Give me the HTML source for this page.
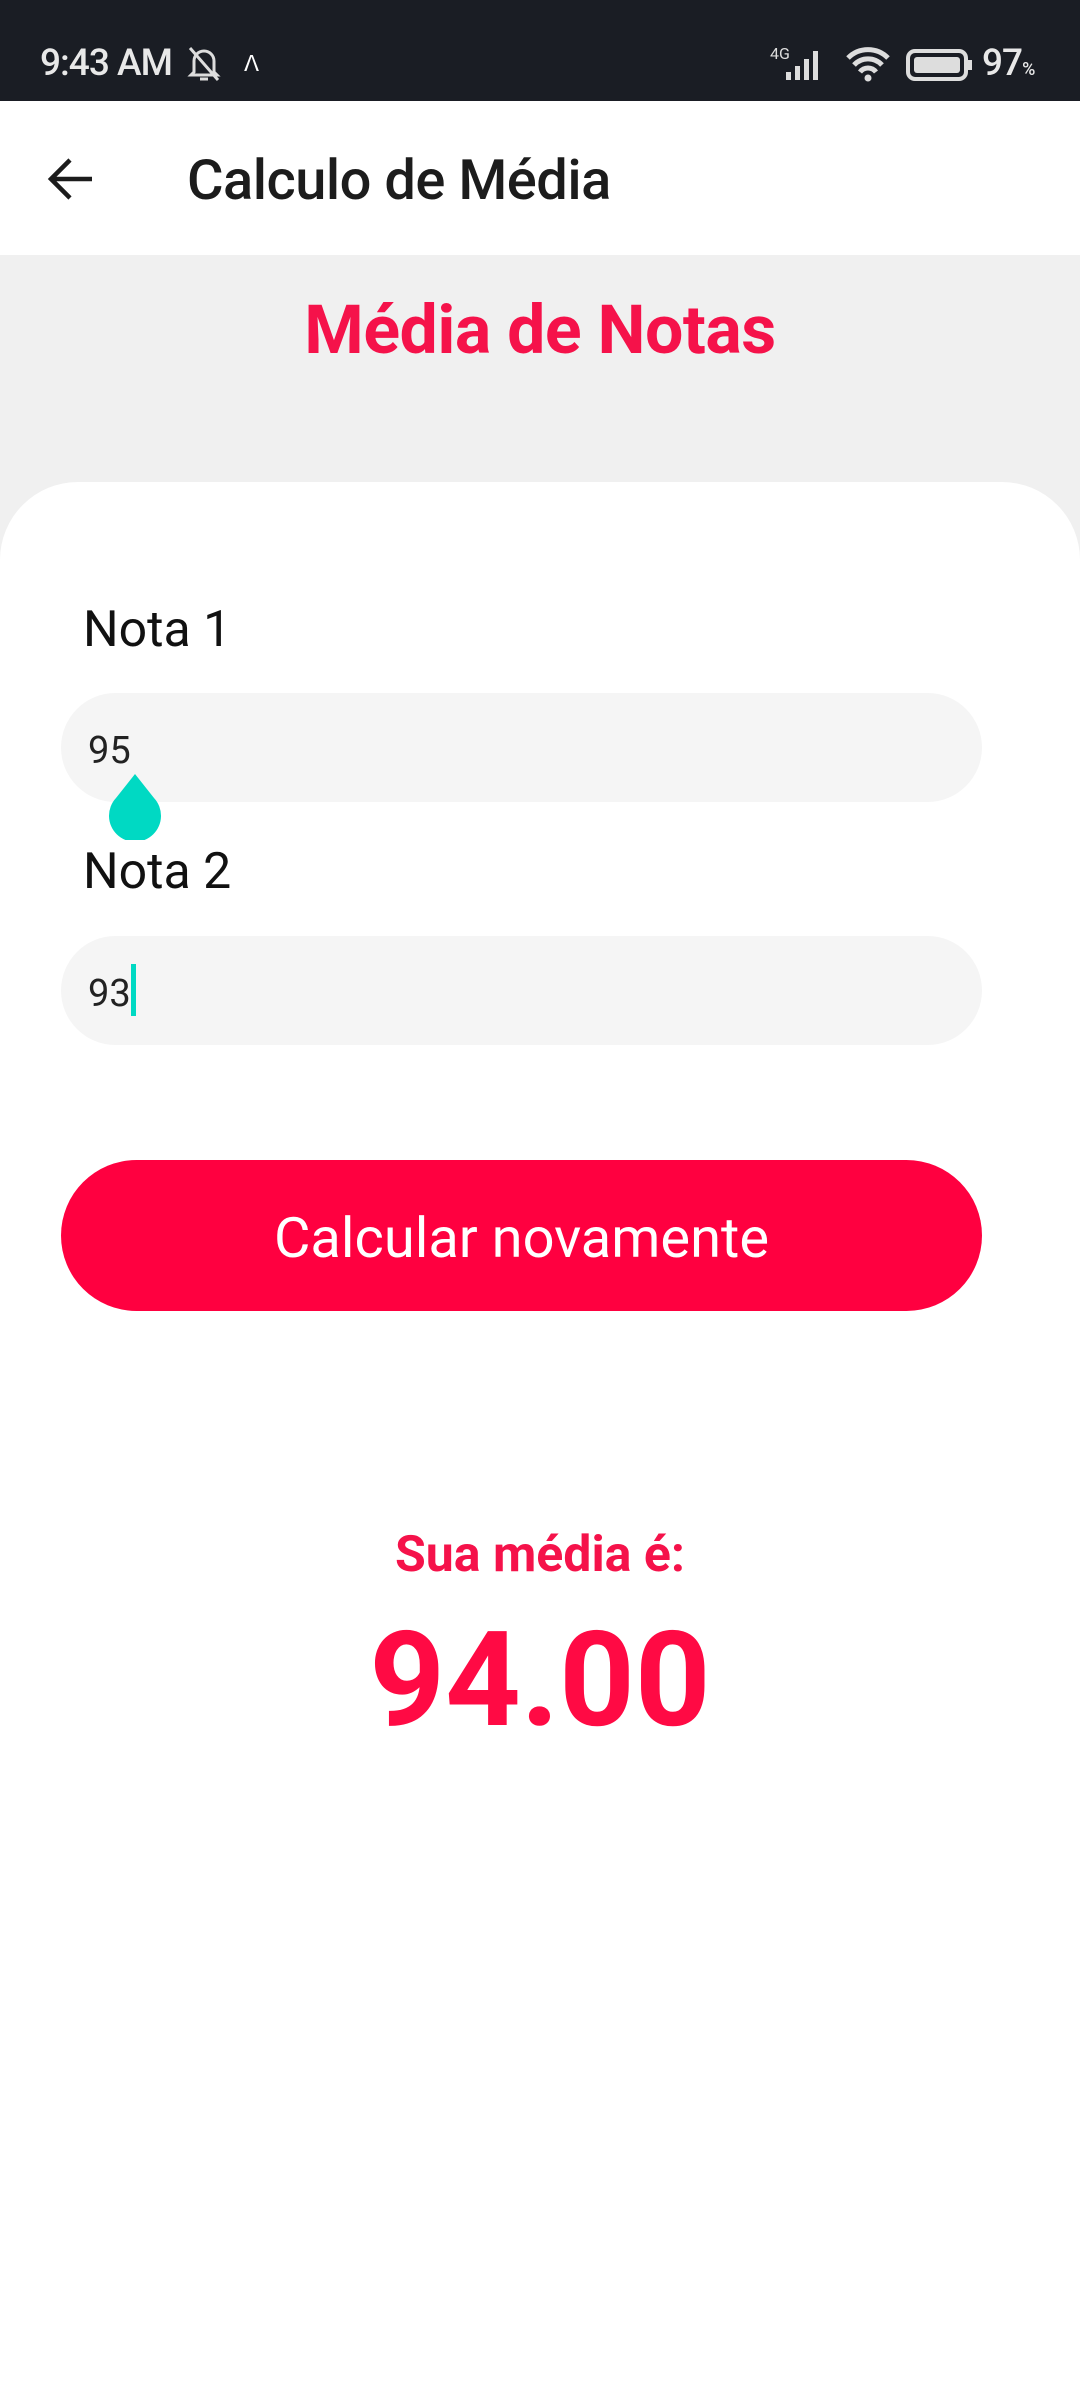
<!DOCTYPE html>
<html><head><meta charset="utf-8"><style>
*{margin:0;padding:0;box-sizing:border-box}
body{width:1080px;height:2400px;position:relative;background:#fff;font-family:"Roboto","Liberation Sans",sans-serif;overflow:hidden}
.a{position:absolute;white-space:nowrap}
</style></head><body>
<div class="a" style="left:0;top:0;width:1080px;height:101px;background:#1a1d24"></div>
<div class="a" style="left:40px;top:42px;color:#e8e8e8;font-size:37px;font-weight:500;letter-spacing:-1px">9:43 AM</div>
<svg class="a" style="left:186px;top:44px" width="36" height="40" viewBox="0 0 36 40"><path d="M8 28 V17 a10 10 0 0 1 20 0 V28 l3 3 H5z M14 35 h8" fill="none" stroke="#ddd" stroke-width="3"/><path d="M4 4 L32 36" stroke="#ddd" stroke-width="3"/></svg>
<div class="a" style="left:244px;top:52px;color:#fff;font-size:22px">ᐱ</div>
<div class="a" style="left:770px;top:44px;color:#ddd;font-size:16px">4G</div>
<svg class="a" style="left:786px;top:48px" width="48" height="34"><rect x="0" y="24" width="5" height="8" fill="#ddd"/><rect x="9" y="18" width="5" height="14" fill="#ddd"/><rect x="18" y="11" width="5" height="21" fill="#ddd"/><rect x="27" y="3" width="5" height="29" fill="#ddd"/></svg>
<svg class="a" style="left:845px;top:46px" width="46" height="36" viewBox="0 0 46 36"><path d="M3 12 a28 28 0 0 1 40 0 M9 19 a19 19 0 0 1 28 0 M15 26 a10 10 0 0 1 16 0" fill="none" stroke="#ddd" stroke-width="5"/><circle cx="23" cy="32" r="3.5" fill="#ddd"/></svg>
<svg class="a" style="left:906px;top:48px" width="70" height="34"><rect x="2" y="3" width="58" height="28" rx="7" fill="none" stroke="#ddd" stroke-width="4"/><rect x="8" y="9" width="46" height="16" rx="3" fill="#ddd"/><rect x="62" y="12" width="4" height="10" fill="#ddd"/></svg>
<div class="a" style="left:982px;top:42px;color:#e8e8e8;font-size:37px;font-weight:500;letter-spacing:-1px">97<span style="font-size:18px">%</span></div>

<svg class="a" style="left:46px;top:156px" width="50" height="46" viewBox="0 0 50 46"><path d="M46 23 H6 M24 4 L5 23 L24 42" fill="none" stroke="#1c1c1c" stroke-width="4.5"/></svg>
<div class="a" style="left:187px;top:147px;color:#1c1c1c;font-size:56px;font-weight:500;letter-spacing:-0.5px">Calculo de Média</div>

<div class="a" style="left:0;top:255px;width:1080px;height:400px;background:#f0f0f0"></div>
<div class="a" style="left:0;top:290px;width:1080px;text-align:center;color:#f5124a;font-size:68px;font-weight:bold;letter-spacing:-0.5px">Média de Notas</div>
<div class="a" style="left:0;top:482px;width:1080px;height:1918px;background:#fff;border-radius:78px 78px 0 0"></div>

<div class="a" style="left:83px;top:601px;color:#111;font-size:50px">Nota 1</div>
<div class="a" style="left:61px;top:693px;width:921px;height:109px;background:#f5f5f5;border-radius:55px"></div>
<div class="a" style="left:88px;top:729px;color:#222;font-size:38px">95</div>
<svg class="a" style="left:106px;top:774px" width="58" height="66" viewBox="0 0 58 66"><path d="M29 0 L10 24 A26 26 0 1 0 48 24 Z" fill="#00d9c3"/></svg>

<div class="a" style="left:83px;top:843px;color:#111;font-size:50px">Nota 2</div>
<div class="a" style="left:61px;top:936px;width:921px;height:109px;background:#f5f5f5;border-radius:55px"></div>
<div class="a" style="left:88px;top:972px;color:#222;font-size:38px">93</div>
<div class="a" style="left:131px;top:964px;width:5px;height:52px;background:#00d9c3"></div>

<div class="a" style="left:61px;top:1160px;width:921px;height:151px;background:#ff0040;border-radius:76px"></div>
<div class="a" style="left:61px;top:1205px;width:921px;text-align:center;color:#fff;font-size:56px">Calcular novamente</div>

<div class="a" style="left:0;top:1526px;width:1080px;text-align:center;color:#f5124a;font-size:50px;font-weight:bold">Sua média é:</div>
<div class="a" style="left:0;top:1604px;width:1080px;text-align:center;color:#ff0a44;font-size:132px;font-weight:bold">94.00</div>
</body></html>
